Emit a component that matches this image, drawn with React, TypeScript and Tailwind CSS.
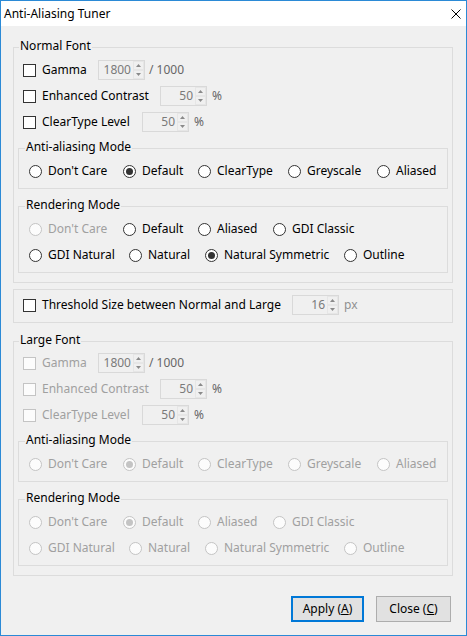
import React from 'react'
import cn from 'clsx'

type GroupProps = {
  title?: string
  labelLeft?: string
  className?: string
  children: React.ReactNode
}

function Group({ title, labelLeft = 'left-[5px]', className, children }: GroupProps) {
  return (
    <div className={cn('relative border border-[#dcdcdc]', className)}>
      {title && (
        <span className={cn('absolute top-[-10px] bg-[#f0f0f0] px-[1px] leading-[16px] text-black', labelLeft)}>
          {title}
        </span>
      )}
      {children}
    </div>
  )
}

function Check({ disabled }: { disabled?: boolean }) {
  return (
    <span
      className={cn(
        'block h-[13px] w-[13px] shrink-0 border',
        disabled ? 'border-[#c4c4c4] bg-[#fcfcfc]' : 'border-[#333333] bg-white'
      )}
    />
  )
}

function Radio({ checked, disabled }: { checked?: boolean; disabled?: boolean }) {
  return (
    <span
      className={cn(
        'flex h-[13px] w-[13px] shrink-0 items-center justify-center rounded-full border',
        disabled ? 'border-[#c4c4c4] bg-[#fcfcfc]' : 'border-[#333333] bg-white'
      )}
    >
      {checked && (
        <span className={cn('block h-[7px] w-[7px] rounded-full', disabled ? 'bg-[#c4c4c4]' : 'bg-[#333333]')} />
      )}
    </span>
  )
}

function Spin({ value }: { value: string }) {
  return (
    <div className="flex h-[20px] w-[47px] shrink-0 border border-[#d9d9d9] bg-[#f0f0f0]">
      <div className="flex-1 pr-[2px] text-right leading-[18px] text-[#7a7a7a]">{value}</div>
      <div className="flex w-[11px] flex-col">
        <div className="flex h-[9px] items-center justify-center border border-[#e6e6e6]">
          <svg width="5" height="3" viewBox="0 0 5 3">
            <path d="M0 3 L2.5 0 L5 3 Z" fill="#8a8a8a" />
          </svg>
        </div>
        <div className="flex h-[9px] items-center justify-center border border-[#e6e6e6]">
          <svg width="5" height="3" viewBox="0 0 5 3">
            <path d="M0 0 L2.5 3 L5 0 Z" fill="#8a8a8a" />
          </svg>
        </div>
      </div>
    </div>
  )
}

type SpinRowProps = {
  label: string
  labelWidth: string
  value: string
  unit: string
  disabled?: boolean
  unitClass?: string
}

function SpinRow({ label, labelWidth, value, unit, disabled, unitClass = 'ml-[5px]' }: SpinRowProps) {
  return (
    <div className="flex h-[20px] items-center pl-[5px]">
      <Check disabled={disabled} />
      <span className={cn('ml-[6px] whitespace-nowrap', labelWidth, disabled ? 'text-[#a0a0a0]' : 'text-black')}>
        {label}
      </span>
      <Spin value={value} />
      <span className={cn('whitespace-nowrap text-[#666666]', unitClass)}>{unit}</span>
    </div>
  )
}

type Opt = { label: string; width: string; checked?: boolean; disabled?: boolean }

function RadioRow({ options, disabled }: { options: Opt[]; disabled?: boolean }) {
  return (
    <div className="flex h-[16px] items-center pl-[10px]">
      {options.map((o) => {
        const off = disabled || o.disabled
        return (
          <div key={o.label} className={cn('flex items-center', o.width)}>
            <Radio checked={o.checked} disabled={off} />
            <span className={cn('ml-[6px] whitespace-nowrap leading-[16px]', off ? 'text-[#a0a0a0]' : 'text-black')}>
              {o.label}
            </span>
          </div>
        )
      })}
    </div>
  )
}

function FontGroup({ title, disabled, className }: { title: string; disabled?: boolean; className?: string }) {
  return (
    <Group title={title} className={cn('ml-[12px] mr-[13px] px-[4px] pb-[9px]', className)}>
      <div className="flex flex-col gap-[6px]">
        <SpinRow label="Gamma" labelWidth="w-[56px]" value="1800" unit="/ 1000" unitClass="ml-[4px]" disabled={disabled} />
        <SpinRow label="Enhanced Contrast" labelWidth="w-[118px]" value="50" unit="%" disabled={disabled} />
        <SpinRow label="ClearType Level" labelWidth="w-[100px]" value="50" unit="%" disabled={disabled} />
      </div>
      <Group title="Anti-aliasing Mode" labelLeft="left-[6px]" className="mt-[16px] pt-[14px] pb-[9px]">
        <RadioRow
          disabled={disabled}
          options={[
            { label: "Don't Care", width: 'w-[94px]' },
            { label: 'Default', width: 'w-[75px]', checked: true },
            { label: 'ClearType', width: 'w-[90px]' },
            { label: 'Greyscale', width: 'w-[89px]' },
            { label: 'Aliased', width: 'w-auto' },
          ]}
        />
      </Group>
      <Group title="Rendering Mode" labelLeft="left-[6px]" className="mt-[17px] flex flex-col gap-[10px] pt-[14px] pb-[9px]">
        <RadioRow
          disabled={disabled}
          options={[
            { label: "Don't Care", width: 'w-[94px]', disabled: true },
            { label: 'Default', width: 'w-[75px]', checked: !!disabled },
            { label: 'Aliased', width: 'w-[75px]' },
            { label: 'GDI Classic', width: 'w-auto' },
          ]}
        />
        <RadioRow
          disabled={disabled}
          options={[
            { label: 'GDI Natural', width: 'w-[100px]' },
            { label: 'Natural', width: 'w-[76px]' },
            { label: 'Natural Symmetric', width: 'w-[139px]', checked: !disabled },
            { label: 'Outline', width: 'w-auto' },
          ]}
        />
      </Group>
    </Group>
  )
}

export default function App() {
  return (
    <div className="flex h-[636px] w-[467px] flex-col overflow-hidden border border-[#2b8ad6] bg-[#f0f0f0] font-['Noto_Sans',sans-serif] text-[12px] text-black">
      <div className="flex h-[25px] shrink-0 items-center justify-between bg-white pl-[3px] pr-[5px]">
        <span className="leading-[16px]">Anti-Aliasing Tuner</span>
        <svg width="10" height="10" viewBox="0 0 10 10">
          <path d="M0.5 0.5 L9.5 9.5 M9.5 0.5 L0.5 9.5" stroke="#000" strokeWidth="1" />
        </svg>
      </div>

      <FontGroup title="Normal Font" className="mt-[21px] pt-[12px]" />

      <Group className="ml-[12px] mr-[13px] mt-[6px] px-[9px] pt-[5px] pb-[7px]">
        <div className="flex h-[20px] items-center">
          <Check />
          <span className="ml-[6px] w-[250px] whitespace-nowrap">Threshold Size between Normal and Large</span>
          <Spin value="16" />
          <span className="ml-[5px] text-[#909090]">px</span>
        </div>
      </Group>

      <FontGroup title="Large Font" disabled className="mt-[18px] pt-[11px]" />

      <div className="mt-[20px] flex justify-end gap-[12px] pr-[15px]">
        <button className="flex h-[26px] w-[73px] items-center justify-center border-2 border-[#0078d7] bg-[#e1e1e1] leading-[16px]">
          Apply (<span className="underline">A</span>)
        </button>
        <button className="flex h-[26px] w-[75px] items-center justify-center border border-[#adadad] bg-[#e1e1e1] leading-[16px]">
          Close (<span className="underline">C</span>)
        </button>
      </div>
    </div>
  )
}
